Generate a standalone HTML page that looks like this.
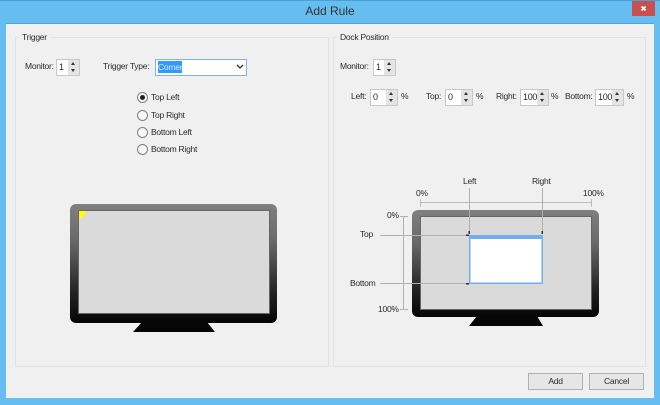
<!DOCTYPE html>
<html><head><meta charset="utf-8">
<style>
html,body{margin:0;padding:0}
body{width:660px;height:405px;position:relative;overflow:hidden;background:#65bdf0;font-family:"Liberation Sans",sans-serif;font-size:8.5px;letter-spacing:-.25px;color:#2a2a2a}
.a{position:absolute}
.t{position:absolute;white-space:nowrap;line-height:13px;filter:blur(.25px)}
.g{position:absolute;border:1px solid #e3e3e3;box-sizing:border-box}
.gl{position:absolute;background:#f0f0f0;padding:0 3px;white-space:nowrap;line-height:13px;filter:blur(.25px)}
.s{position:absolute;height:17px;background:#fff;border:1px solid #c8c8c8;box-sizing:border-box}
.s span{position:absolute;left:2px;top:1px;line-height:13px;font-size:9px;letter-spacing:-.3px;filter:blur(.25px)}
.s i{position:absolute;right:0;top:0;width:11px;height:15px;background:#e4e4e4}
.s i:before{content:"";position:absolute;left:3px;top:2px;border:2.5px solid transparent;border-top:0;border-bottom:3px solid #333}
.s i:after{content:"";position:absolute;left:3px;top:9px;border:2.5px solid transparent;border-bottom:0;border-top:3px solid #333}
.r{position:absolute;left:137px;width:11px;height:11px;border:1px solid #808080;border-radius:50%;box-sizing:border-box;background:#f8f8f8}
.b{position:absolute;top:373px;width:55px;height:17px;border:1px solid #b0b0b0;background:#e6e6e6;box-sizing:border-box;text-align:center;line-height:15px;filter:blur(.2px)}
</style></head><body>
<div class="a" style="left:0;top:0;width:660px;height:1px;background:#4a9fd4"></div>
<div class="t" style="left:0;top:3px;width:660px;text-align:center;font-size:12px;letter-spacing:0;line-height:17px;color:#333">Add Rule</div>
<div class="a" style="left:632px;top:1px;width:23px;height:15px;background:#c75050"></div>
<svg class="a" style="left:632px;top:1px" width="23" height="15"><path d="M9.500 5.500l4 4M13.500 5.500l-4 4" stroke="#fff" stroke-width="1.600" fill="none"/></svg>
<div class="a" style="left:6px;top:23px;width:648px;height:375px;background:#f0f0f0;border-top:1px solid #4fa5da;box-sizing:border-box"></div>

<div class="g" style="left:15px;top:37px;width:314px;height:330px"></div>
<div class="gl" style="left:19px;top:31px">Trigger</div>
<div class="g" style="left:333px;top:37px;width:313px;height:330px"></div>
<div class="gl" style="left:337px;top:31px">Dock Position</div>

<div class="t" style="left:25px;top:60px">Monitor:</div>
<div class="s" style="left:56px;top:59px;width:24px"><span>1</span><i></i></div>
<div class="t" style="left:103px;top:60px">Trigger Type:</div>
<div class="a" style="left:155px;top:59px;width:92px;height:17px;background:#fff;border:1px solid #7eb4ea;box-sizing:border-box"></div>
<div class="t" style="left:158px;top:61px;width:24px;background:#3399ff;color:#dbeaff;line-height:12px">Corner</div>
<svg class="a" style="left:235px;top:63px" width="10" height="8"><path d="M2 2l3 3 3-3" fill="none" stroke="#333" stroke-width="1.300"/></svg>

<div class="r" style="top:92px"></div><div class="a" style="left:140px;top:95px;width:5px;height:5px;border-radius:50%;background:#222"></div>
<div class="r" style="top:110px"></div>
<div class="r" style="top:127px"></div>
<div class="r" style="top:144px"></div>
<div class="t" style="left:151px;top:91px">Top Left</div>
<div class="t" style="left:151px;top:109px">Top Right</div>
<div class="t" style="left:151px;top:126px">Bottom Left</div>
<div class="t" style="left:151px;top:143px">Bottom Right</div>

<div class="t" style="left:340px;top:60px">Monitor:</div>
<div class="s" style="left:373px;top:59px;width:23px"><span>1</span><i></i></div>

<div class="t" style="left:351px;top:90px">Left:</div>
<div class="s" style="left:370px;top:89px;width:28px"><span>0</span><i></i></div>
<div class="t" style="left:401px;top:90px">%</div>
<div class="t" style="left:426px;top:90px">Top:</div>
<div class="s" style="left:445px;top:89px;width:28px"><span>0</span><i></i></div>
<div class="t" style="left:476px;top:90px">%</div>
<div class="t" style="left:496px;top:90px">Right:</div>
<div class="s" style="left:520px;top:89px;width:29px"><span>100</span><i></i></div>
<div class="t" style="left:551px;top:90px">%</div>
<div class="t" style="left:565px;top:90px">Bottom:</div>
<div class="s" style="left:595px;top:89px;width:29px"><span>100</span><i></i></div>
<div class="t" style="left:627px;top:90px">%</div>

<svg class="a" style="left:0;top:0" width="660" height="405">
<defs>
<linearGradient id="m" x1="0" y1="0" x2="0" y2="1"><stop offset="0" stop-color="#808080"/><stop offset=".3" stop-color="#6a6a6a"/><stop offset=".75" stop-color="#222"/><stop offset="1" stop-color="#050505"/></linearGradient>
</defs>
<rect x="70" y="204" width="207" height="119" rx="6" fill="url(#m)"/>
<rect x="78.500" y="210.500" width="191" height="103" fill="#dadada" stroke="#666"/>
<path d="M79 211h7q-1 6-7 8z" fill="#ffff00"/>
<path d="M142 322h65l8 10h-82z" fill="#060606"/>

<rect x="412" y="210" width="187" height="107" rx="6" fill="url(#m)"/>
<rect x="420.500" y="216.500" width="171" height="93" fill="#dadada" stroke="#666"/>
<path d="M477 316h60l6 10h-74z" fill="#060606"/>
<rect x="469.750" y="235.750" width="72.500" height="47.500" fill="#fff" stroke="#70aef0" stroke-width="1.500"/>
<rect x="469" y="235" width="74" height="4" fill="#70aef0"/>
<g fill="none">
<path d="M420 202.500h172M420.500 199v8M591.500 199v8" stroke="#bbb"/>
<path d="M403.500 216v93M400 216.500h8M400 309.500h8" stroke="#b0b0b0"/>
<path d="M380 235.500h87M380 283.500h87" stroke="#b0b0b0"/>
<path d="M469.500 188v44M542.500 188v44" stroke="#b0b0b0"/>
</g>
<path d="M466 234.500h3v1.500h-3zM466 283h3v1.500h-3zM468.500 231h1.500v3h-1.500zM541.500 231h1.500v3h-1.500z" fill="#333"/>
</svg>

<div class="t" style="left:463px;top:175px">Left</div>
<div class="t" style="left:532px;top:175px">Right</div>
<div class="t" style="left:416px;top:187px">0%</div>
<div class="t" style="left:583px;top:187px">100%</div>
<div class="t" style="left:387px;top:209px">0%</div>
<div class="t" style="left:360px;top:228px">Top</div>
<div class="t" style="left:350px;top:277px">Bottom</div>
<div class="t" style="left:378px;top:303px">100%</div>

<div class="b" style="left:528px">Add</div>
<div class="b" style="left:589px">Cancel</div>
</body></html>
